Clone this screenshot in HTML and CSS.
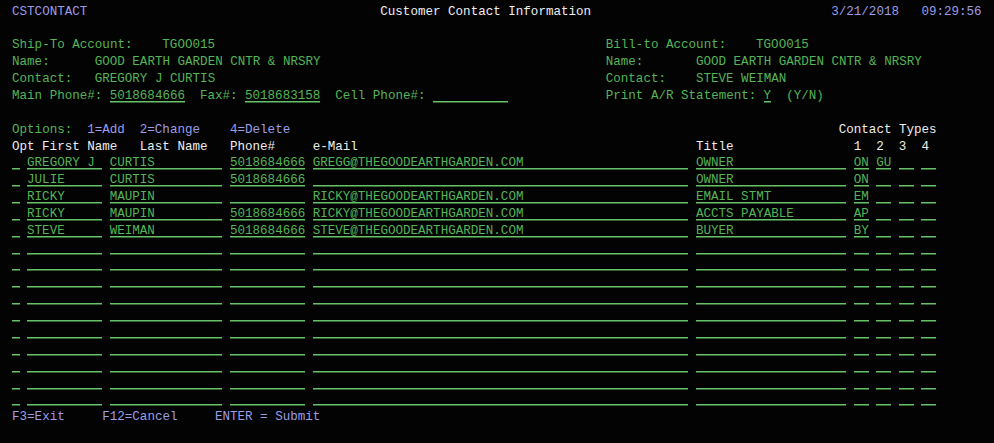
FILE: index.html
```html
<!DOCTYPE html>
<html lang="en">
<head>
<meta charset="utf-8">
<title>Customer Contact Information</title>
<link rel="stylesheet" href="styles.css">
</head>
<body>
<div class="screen">
  <div class="row">
    <span class="b x1">CSTCONTACT</span>
    <span class="w x50">Customer Contact Information</span>
    <span class="b x110">3/21/2018</span>
    <span class="b x122">09:29:56</span>
  </div>
  <div class="row"></div>
  <div class="row">
    <span class="x1">Ship-To Account:</span>
    <span class="x21">TGOO015</span>
    <span class="x80">Bill-to Account:</span>
    <span class="x100">TGOO015</span>
  </div>
  <div class="row">
    <span class="x1">Name:</span>
    <span class="x12">GOOD EARTH GARDEN CNTR &amp; NRSRY</span>
    <span class="x80">Name:</span>
    <span class="x92">GOOD EARTH GARDEN CNTR &amp; NRSRY</span>
  </div>
  <div class="row">
    <span class="x1">Contact:</span>
    <span class="x12">GREGORY J CURTIS</span>
    <span class="x80">Contact:</span>
    <span class="x92">STEVE WEIMAN</span>
  </div>
  <div class="row">
    <span class="x1">Main Phone#:</span>
    <span class="f x14 s10">5018684666</span>
    <span class="x26">Fax#:</span>
    <span class="f x32 s10">5018683158</span>
    <span class="x44">Cell Phone#:</span>
    <span class="f x57 s10"></span>
    <span class="x80">Print A/R Statement:</span>
    <span class="f x101 s1">Y</span>
    <span class="x104">(Y/N)</span>
  </div>
  <div class="row"></div>
  <div class="row">
    <span class="x1">Options:</span>
    <span class="b x11">1=Add</span>
    <span class="b x18">2=Change</span>
    <span class="b x30">4=Delete</span>
    <span class="w x111">Contact Types</span>
  </div>
  <div class="row">
    <span class="w x1">Opt</span>
    <span class="w x5">First Name</span>
    <span class="w x18">Last Name</span>
    <span class="w x30">Phone#</span>
    <span class="w x41">e-Mail</span>
    <span class="w x92">Title</span>
    <span class="w x113">1</span>
    <span class="w x116">2</span>
    <span class="w x119">3</span>
    <span class="w x122">4</span>
  </div>

  <div class="row">
    <span class="f x1 s1"></span><span class="f x3 s10">GREGORY J</span><span class="f x14 s15">CURTIS</span><span class="f x30 s10">5018684666</span><span class="f x41 s50">GREGG@THEGOODEARTHGARDEN.COM</span><span class="f x92 s20">OWNER</span><span class="f x113 s2">ON</span><span class="f x116 s2">GU</span><span class="f x119 s2"></span><span class="f x122 s2"></span>
  </div>
  <div class="row">
    <span class="f x1 s1"></span><span class="f x3 s10">JULIE</span><span class="f x14 s15">CURTIS</span><span class="f x30 s10">5018684666</span><span class="f x41 s50"></span><span class="f x92 s20">OWNER</span><span class="f x113 s2">ON</span><span class="f x116 s2"></span><span class="f x119 s2"></span><span class="f x122 s2"></span>
  </div>
  <div class="row">
    <span class="f x1 s1"></span><span class="f x3 s10">RICKY</span><span class="f x14 s15">MAUPIN</span><span class="f x30 s10"></span><span class="f x41 s50">RICKY@THEGOODEARTHGARDEN.COM</span><span class="f x92 s20">EMAIL STMT</span><span class="f x113 s2">EM</span><span class="f x116 s2"></span><span class="f x119 s2"></span><span class="f x122 s2"></span>
  </div>
  <div class="row">
    <span class="f x1 s1"></span><span class="f x3 s10">RICKY</span><span class="f x14 s15">MAUPIN</span><span class="f x30 s10">5018684666</span><span class="f x41 s50">RICKY@THEGOODEARTHGARDEN.COM</span><span class="f x92 s20">ACCTS PAYABLE</span><span class="f x113 s2">AP</span><span class="f x116 s2"></span><span class="f x119 s2"></span><span class="f x122 s2"></span>
  </div>
  <div class="row">
    <span class="f x1 s1"></span><span class="f x3 s10">STEVE</span><span class="f x14 s15">WEIMAN</span><span class="f x30 s10">5018684666</span><span class="f x41 s50">STEVE@THEGOODEARTHGARDEN.COM</span><span class="f x92 s20">BUYER</span><span class="f x113 s2">BY</span><span class="f x116 s2"></span><span class="f x119 s2"></span><span class="f x122 s2"></span>
  </div>
  <div class="row blank"><span class="f x1 s1"></span><span class="f x3 s10"></span><span class="f x14 s15"></span><span class="f x30 s10"></span><span class="f x41 s50"></span><span class="f x92 s20"></span><span class="f x113 s2"></span><span class="f x116 s2"></span><span class="f x119 s2"></span><span class="f x122 s2"></span></div>
  <div class="row blank"><span class="f x1 s1"></span><span class="f x3 s10"></span><span class="f x14 s15"></span><span class="f x30 s10"></span><span class="f x41 s50"></span><span class="f x92 s20"></span><span class="f x113 s2"></span><span class="f x116 s2"></span><span class="f x119 s2"></span><span class="f x122 s2"></span></div>
  <div class="row blank"><span class="f x1 s1"></span><span class="f x3 s10"></span><span class="f x14 s15"></span><span class="f x30 s10"></span><span class="f x41 s50"></span><span class="f x92 s20"></span><span class="f x113 s2"></span><span class="f x116 s2"></span><span class="f x119 s2"></span><span class="f x122 s2"></span></div>
  <div class="row blank"><span class="f x1 s1"></span><span class="f x3 s10"></span><span class="f x14 s15"></span><span class="f x30 s10"></span><span class="f x41 s50"></span><span class="f x92 s20"></span><span class="f x113 s2"></span><span class="f x116 s2"></span><span class="f x119 s2"></span><span class="f x122 s2"></span></div>
  <div class="row blank"><span class="f x1 s1"></span><span class="f x3 s10"></span><span class="f x14 s15"></span><span class="f x30 s10"></span><span class="f x41 s50"></span><span class="f x92 s20"></span><span class="f x113 s2"></span><span class="f x116 s2"></span><span class="f x119 s2"></span><span class="f x122 s2"></span></div>
  <div class="row blank"><span class="f x1 s1"></span><span class="f x3 s10"></span><span class="f x14 s15"></span><span class="f x30 s10"></span><span class="f x41 s50"></span><span class="f x92 s20"></span><span class="f x113 s2"></span><span class="f x116 s2"></span><span class="f x119 s2"></span><span class="f x122 s2"></span></div>
  <div class="row blank"><span class="f x1 s1"></span><span class="f x3 s10"></span><span class="f x14 s15"></span><span class="f x30 s10"></span><span class="f x41 s50"></span><span class="f x92 s20"></span><span class="f x113 s2"></span><span class="f x116 s2"></span><span class="f x119 s2"></span><span class="f x122 s2"></span></div>
  <div class="row blank"><span class="f x1 s1"></span><span class="f x3 s10"></span><span class="f x14 s15"></span><span class="f x30 s10"></span><span class="f x41 s50"></span><span class="f x92 s20"></span><span class="f x113 s2"></span><span class="f x116 s2"></span><span class="f x119 s2"></span><span class="f x122 s2"></span></div>
  <div class="row blank"><span class="f x1 s1"></span><span class="f x3 s10"></span><span class="f x14 s15"></span><span class="f x30 s10"></span><span class="f x41 s50"></span><span class="f x92 s20"></span><span class="f x113 s2"></span><span class="f x116 s2"></span><span class="f x119 s2"></span><span class="f x122 s2"></span></div>
  <div class="row blank"><span class="f x1 s1"></span><span class="f x3 s10"></span><span class="f x14 s15"></span><span class="f x30 s10"></span><span class="f x41 s50"></span><span class="f x92 s20"></span><span class="f x113 s2"></span><span class="f x116 s2"></span><span class="f x119 s2"></span><span class="f x122 s2"></span></div>

  <div class="row">
    <span class="b x1">F3=Exit</span>
    <span class="b x13">F12=Cancel</span>
    <span class="b x28">ENTER = Submit</span>
  </div>
  <div class="row"></div>
  <div class="row"></div>
</div>
</body>
</html>
```

FILE: styles.css
```css
:root {
  --cw: 7.5303px;
  --rh: 16.875px;
  --green: #55b455;
  --line: #66c266;
  --blue: #9d9de6;
  --white: #eeeeee;
}

html, body {
  margin: 0;
  padding: 0;
  background: #030303;
  overflow: hidden;
}

.screen {
  width: 994px;
  height: 443px;
  box-sizing: border-box;
  padding: 3.6px 0 0 4.5px;
  font-family: "Liberation Mono", "DejaVu Sans Mono", monospace;
  font-size: 12.55px;
  color: var(--green);
}

.row {
  display: grid;
  grid-template-columns: repeat(132, var(--cw));
  height: var(--rh);
  line-height: var(--rh);
  white-space: pre;
}

.row > span {
  grid-row: 1;
  min-width: 0;
}

.b { color: var(--blue); }
.w { color: var(--white); }

.f {
  background: linear-gradient(var(--line), var(--line)) 0 12.7px / 100% 1.5px no-repeat;
}

.s1 { grid-column-end: span 1; }
.s2 { grid-column-end: span 2; }
.s10 { grid-column-end: span 10; }
.s15 { grid-column-end: span 15; }
.s20 { grid-column-end: span 20; }
.s50 { grid-column-end: span 50; }

.x1 { grid-column-start: 2; }
.x3 { grid-column-start: 4; }
.x5 { grid-column-start: 6; }
.x11 { grid-column-start: 12; }
.x12 { grid-column-start: 13; }
.x13 { grid-column-start: 14; }
.x14 { grid-column-start: 15; }
.x18 { grid-column-start: 19; }
.x21 { grid-column-start: 22; }
.x26 { grid-column-start: 27; }
.x28 { grid-column-start: 29; }
.x30 { grid-column-start: 31; }
.x32 { grid-column-start: 33; }
.x41 { grid-column-start: 42; }
.x44 { grid-column-start: 45; }
.x50 { grid-column-start: 51; }
.x57 { grid-column-start: 58; }
.x80 { grid-column-start: 81; }
.x92 { grid-column-start: 93; }
.x100 { grid-column-start: 101; }
.x101 { grid-column-start: 102; }
.x104 { grid-column-start: 105; }
.x110 { grid-column-start: 111; }
.x111 { grid-column-start: 112; }
.x113 { grid-column-start: 114; }
.x116 { grid-column-start: 117; }
.x119 { grid-column-start: 120; }
.x122 { grid-column-start: 123; }
```
